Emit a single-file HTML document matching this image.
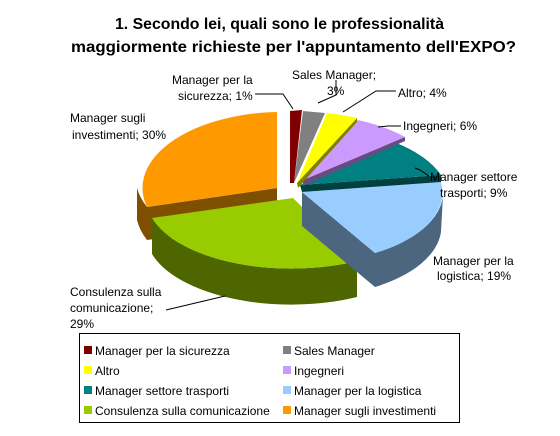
<!DOCTYPE html>
<html><head><style>
body{margin:0;background:#fff;}
svg text{font-family:"Liberation Sans",Arial,sans-serif;}
</style></head><body>
<svg width="560" height="431" viewBox="0 0 560 431" xmlns="http://www.w3.org/2000/svg">
<rect width="560" height="431" fill="#fff"/>
<text x="115" y="29" font-size="16" font-weight="bold" textLength="329" lengthAdjust="spacingAndGlyphs">1. Secondo lei, quali sono le professionalità</text>
<text x="71" y="52" font-size="16" font-weight="bold" textLength="445" lengthAdjust="spacingAndGlyphs">maggiormente richieste per l'appuntamento dell'EXPO?</text>

<!-- orange -->
<path d="M137,188 A140,76 0 0 0 147,207 L147,240 A140,76 0 0 1 137,220 Z" fill="#7f4f00"/>
<path d="M277,188 L147,207 L147,240 L277,222 Z" fill="#7f4f00"/>
<path d="M277,188 L277,112 A140,76 0 0 0 147,207 Z" fill="#ff9900"/>
<!-- green -->
<path d="M152,218 A145,70 0 0 0 357,261 L357,297 A145,70 0 0 1 152,254 Z" fill="#4d6600"/>
<path d="M293,198 L152,218 A145,70 0 0 0 357,261 Z" fill="#99cc00"/>
<!-- light blue -->
<path d="M302,192 L375,253 L375,287 L302,226 Z" fill="#4c6680"/>
<path d="M443,195 A135,70 0 0 1 375,253 L375,287 A135,70 0 0 0 441,232 Z" fill="#4c6680"/>
<path d="M302,192 L441,182 A135,70 0 0 1 375,253 Z" fill="#99ccff"/>
<!-- teal -->
<path d="M300,185 L441,175 L441,182 L302,192 Z" fill="#004040"/>
<path d="M300,185 L394,142 A143,72 0 0 1 441,175 Z" fill="#008080"/>
<!-- lavender -->
<path d="M303,180 L405,137 L405,141 L303,186 Z" fill="#664c80"/>
<path d="M303,180 L358,120 A143,72 0 0 1 405,137 Z" fill="#cc99ff"/>
<!-- yellow -->
<path d="M297,183 L357,118 L357,122 L298,188 Z" fill="#808000"/>
<path d="M297,183 L327,113 A143,72 0 0 1 357,118 Z" fill="#ffff00"/>
<!-- gray -->
<path d="M294,183 L303,111 L325,113 Z" fill="#808080"/>
<!-- dark red -->
<path d="M290,183 L290,111 L302,110 L294,183 Z" fill="#800000"/>

<!-- leader lines -->
<g stroke="#000" stroke-width="1" fill="none">
<path d="M255,94 L283,94 L293,109"/>
<path d="M336,80 L336,95 L318,103"/>
<path d="M396,91 L376,91 L343,112"/>
<path d="M401,126 L388,126 L378,127"/>
<path d="M429,176 L420,170 L415,168"/>
<path d="M166,310 L225,296"/>
</g>

<g font-size="12" fill="#000">
<text x="172" y="84">Manager per la</text>
<text x="178" y="100">sicurezza; 1%</text>
<text x="292" y="79">Sales Manager;</text>
<text x="327" y="95">3%</text>
<text x="398" y="97">Altro; 4%</text>
<text x="403" y="130">Ingegneri; 6%</text>
<text x="430" y="181">Manager settore</text>
<text x="440" y="197">trasporti; 9%</text>
<text x="433" y="265">Manager per la</text>
<text x="437" y="280">logistica; 19%</text>
<text x="70" y="296">Consulenza sulla</text>
<text x="70" y="312">comunicazione;</text>
<text x="70" y="328">29%</text>
<text x="70" y="122">Manager sugli</text>
<text x="72" y="139">investimenti; 30%</text>
</g>

<rect x="79.5" y="333.5" width="380" height="89" fill="#fff" stroke="#000"/>
<g font-size="12">
<rect x="84" y="346" width="8" height="8" fill="#800000"/><text x="95" y="355">Manager per la sicurezza</text>
<rect x="283" y="346" width="8" height="8" fill="#808080"/><text x="294" y="355">Sales Manager</text>
<rect x="84" y="366" width="8" height="8" fill="#ffff00"/><text x="95" y="375">Altro</text>
<rect x="283" y="366" width="8" height="8" fill="#cc99ff"/><text x="294" y="375">Ingegneri</text>
<rect x="84" y="386" width="8" height="8" fill="#008080"/><text x="95" y="395">Manager settore trasporti</text>
<rect x="283" y="386" width="8" height="8" fill="#99ccff"/><text x="294" y="395">Manager per la logistica</text>
<rect x="84" y="406" width="8" height="8" fill="#99cc00"/><text x="95" y="415">Consulenza sulla comunicazione</text>
<rect x="283" y="406" width="8" height="8" fill="#ff9900"/><text x="294" y="415">Manager sugli investimenti</text>
</g>
</svg>
</body></html>
